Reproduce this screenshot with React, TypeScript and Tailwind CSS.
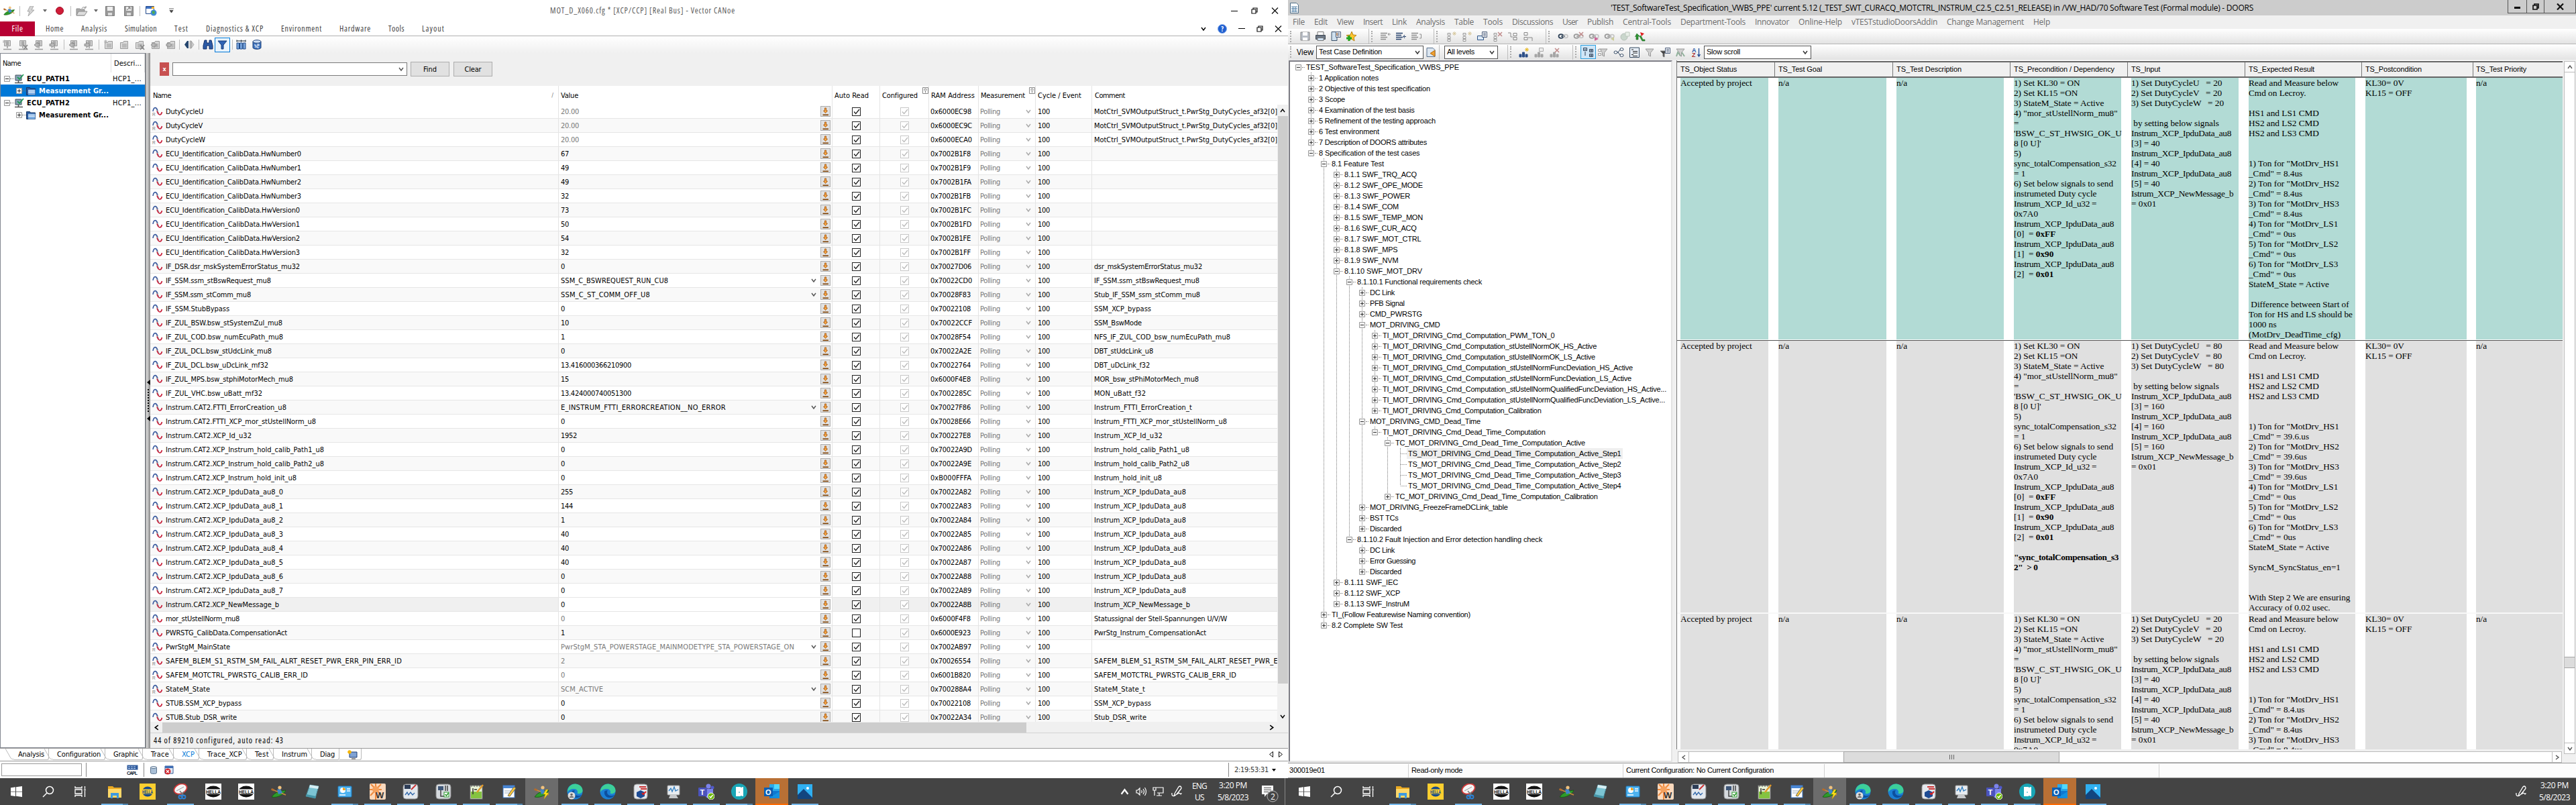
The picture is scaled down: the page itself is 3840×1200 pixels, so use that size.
import { useLayoutEffect, useRef } from "react";
import type { ReactNode } from "react";

/* ---------- text that is tracked to a given width ---------- */

function Fit({ w, className = "", children }: { w: number; className?: string; children: string }) {
  const ref = useRef<HTMLSpanElement>(null);
  useLayoutEffect(() => {
    const el = ref.current;
    if (!el) return;
    el.style.letterSpacing = "0px";
    const natural = el.getBoundingClientRect().width;
    el.style.letterSpacing = `${(w - natural) / Math.max(1, children.length)}px`;
  }, [w, children]);
  return (
    <span className={"inline-block shrink-0 whitespace-pre " + className} style={{ width: w }}>
      <span ref={ref} className="inline-block whitespace-pre">{children}</span>
    </span>
  );
}

/* advance widths of the 11px grid face */
const ADV: Record<number, string> = {
  2: "il", 3: "j. :", 4: "fItr/[]-,", 5: "ckszJL", 6: "abdeghnopquvxyBEFKPSTVXYZ_0123456789",
  7: "ACDGHNRU", 8: "mwMOQ", 10: "W",
};
const adv: Record<string, number> = {};
Object.entries(ADV).forEach(([n, s]) => s.split("").forEach((c) => (adv[c] = Number(n))));
const gridWidth = (s: string) => s.split("").reduce((a, c) => a + (adv[c] ?? 6), 0);

const G = ({ children, className = "" }: { children: string; className?: string }) => (
  <Fit w={gridWidth(children)} className={className}>{children}</Fit>
);

const TAHOMA = "font-['DejaVu_Sans_Condensed','DejaVu_Sans',sans-serif] [font-stretch:condensed] text-[11px]";
const SEGOE = "font-['Open_Sans','Noto_Sans',sans-serif] text-[12px]";
const MSSANS = "font-['Liberation_Sans',sans-serif] text-[11px]";

/* ---------- small glyphs ---------- */

const Chevron = ({ className = "text-[#555]", d = "down", s = 8 }: { className?: string; d?: "down" | "up" | "left" | "right"; s?: number }) => {
  const p = { down: "M1 2l3 4 3-4", up: "M1 6l3-4 3 4", left: "M6 1L2 4l4 3", right: "M2 1l4 3-4 3" }[d];
  return (
    <svg width={s} height={s} viewBox="0 0 8 8" className={"shrink-0 " + className}>
      <path d={p} fill="none" stroke="currentColor" strokeWidth="1.4" />
    </svg>
  );
};

const Sep = ({ className = "mx-[5px]" }: { className?: string }) => <div className={"h-[15px] w-px shrink-0 bg-[#bdbdbd] " + className} />;

const Kayak = ({ size = 24, bolt = false }: { size?: number; bolt?: boolean }) => (
  <svg width={size} height={size} viewBox="0 0 24 24">
    <path d="M1 20C6 12 15 11 22 10C20 16 10 22 1 20z" fill="#2e9a2a" stroke="#12570f" strokeWidth=".8" />
    <path d="M2 9l20 8" stroke="#c98a3c" strokeWidth="1.6" />
    <path d="M1 7l4 1.5-1 3-4-2z" fill="#b56c2a" />
    <path d="M9 9l5-1 3 6-6 2z" fill="#3f86c8" />
    <circle cx="13" cy="6" r="2.6" fill="#f1c27d" />
    {bolt && <path d="M18 9l-4 7h3l-2 7 7-9h-4l3-5z" fill="#ffe11a" stroke="#c79a00" strokeWidth=".5" />}
  </svg>
);

const Restore = ({ w = 1.2 }: { w?: number }) => (
  <svg width="10" height="10" viewBox="0 0 10 10" fill="none" stroke="#111" strokeWidth={w}>
    <path d="M3 3V1h6v6H7M1 3h6v6H1z" />
  </svg>
);
const Close = ({ w = 1.3 }: { w?: number }) => (
  <svg width="11" height="10" viewBox="0 0 11 10" stroke="#111" strokeWidth={w}><path d="M1 .5l9 9M10 .5l-9 9" /></svg>
);
const Min = () => <div className="h-[1px] w-[10px] bg-black" />;

const Slot = ({ children, w = 23 }: { children?: ReactNode; w?: number }) => (
  <div className="flex shrink-0 items-center justify-center" style={{ width: w }}>{children}</div>
);

/* greyed measurement-setup glyphs */
const Dev = ({ v = 0, folder = false }: { v?: number; folder?: boolean }) => (
  <svg width="16" height="16" viewBox="0 0 16 16" fill="none" stroke="#9c9c9c">
    {folder ? (
      <path d="M2.5 4.5h4l1-2h6v11h-11zM5 7h7M5 9h7M5 11h7" fill="#d8d8d8" />
    ) : (
      <>
        <path d="M3.5 1.5h9v8h-9z" fill="#cfcfcf" />
        <path d="M8 10v3M2 14.5h12M6 3.5h4M6 5.5h4M6 7.5h4" strokeWidth="1.5" />
      </>
    )}
    {v === 1 && <path d="M1 3h5M3.5 .5v5M1.5 1l4 4M5.500 1l-4 4" stroke="#b0b0b0" />}
    {v === 2 && <path d="M9 8l6 7M15 8l-6 7" stroke="#8a8a8a" strokeWidth="1.8" />}
    {v === 3 && <path d="M6 4L1 8l5 4V9.500h3v-3H6z" fill="#bbb" stroke="#8f8f8f" />}
    {v === 4 && <path d="M4 4l5 4-5 4V9.500H1v-3h3z" fill="#bbb" stroke="#8f8f8f" />}
  </svg>
);

/* ---------- measurement window ---------- */

type Row = [name: string, value: string, addr: string, comment: string, flags?: string];
/* flags: r = read only, d = value drop-down, u = unchecked, s = selected */
const rows: Row[] = [
  ["DutyCycleU", "20.00", "0x6000EC98", "MotCtrl_SVMOutputStruct_t.PwrStg_DutyCycles_af32[0]", "r"],
  ["DutyCycleV", "20.00", "0x6000EC9C", "MotCtrl_SVMOutputStruct_t.PwrStg_DutyCycles_af32[0]", "r"],
  ["DutyCycleW", "20.00", "0x6000ECA0", "MotCtrl_SVMOutputStruct_t.PwrStg_DutyCycles_af32[0]", "r"],
  ["ECU_Identification_CalibData.HwNumber0", "67", "0x7002B1F8", ""],
  ["ECU_Identification_CalibData.HwNumber1", "49", "0x7002B1F9", ""],
  ["ECU_Identification_CalibData.HwNumber2", "49", "0x7002B1FA", ""],
  ["ECU_Identification_CalibData.HwNumber3", "32", "0x7002B1FB", ""],
  ["ECU_Identification_CalibData.HwVersion0", "73", "0x7002B1FC", ""],
  ["ECU_Identification_CalibData.HwVersion1", "50", "0x7002B1FD", ""],
  ["ECU_Identification_CalibData.HwVersion2", "54", "0x7002B1FE", ""],
  ["ECU_Identification_CalibData.HwVersion3", "32", "0x7002B1FF", ""],
  ["IF_DSR.dsr_mskSystemErrorStatus_mu32", "0", "0x70027D06", "dsr_mskSystemErrorStatus_mu32"],
  ["IF_SSM.ssm_stBswRequest_mu8", "SSM_C_BSWREQUEST_RUN_CU8", "0x70022CD0", "IF_SSM.ssm_stBswRequest_mu8", "d"],
  ["IF_SSM.ssm_stComm_mu8", "SSM_C_ST_COMM_OFF_U8", "0x70028F83", "Stub_IF_SSM_ssm_stComm_mu8", "d"],
  ["IF_SSM.StubBypass", "0", "0x70022108", "SSM_XCP_bypass"],
  ["IF_ZUL_BSW.bsw_stSystemZul_mu8", "10", "0x70022CCF", "SSM_BswMode"],
  ["IF_ZUL_COD.bsw_numEcuPath_mu8", "1", "0x70028F54", "NFS_IF_ZUL_COD_bsw_numEcuPath_mu8"],
  ["IF_ZUL_DCL.bsw_stUdcLink_mu8", "0", "0x70022A2E", "DBT_stUdcLink_u8"],
  ["IF_ZUL_DCL.bsw_uDcLink_mf32", "13.416000366210900", "0x70022764", "DBT_uDcLink_f32"],
  ["IF_ZUL_MPS.bsw_stphiMotorMech_mu8", "15", "0x6000F4E8", "MOR_bsw_stPhiMotorMech_mu8"],
  ["IF_ZUL_VHC.bsw_uBatt_mf32", "13.424000740051300", "0x7002285C", "MON_uBatt_f32"],
  ["Instrum.CAT2.FTTI_ErrorCreation_u8", "E_INSTRUM_FTTI_ERRORCREATION__NO_ERROR", "0x70027F86", "Instrum_FTTI_ErrorCreation_t", "d"],
  ["Instrum.CAT2.FTTI_XCP_mor_stUstellNorm_u8", "0", "0x70028E66", "Instrum_FTTI_XCP_mor_stUstellNorm_u8"],
  ["Instrum.CAT2.XCP_Id_u32", "1952", "0x700227E8", "Instrum_XCP_Id_u32"],
  ["Instrum.CAT2.XCP_Instrum_hold_calib_Path1_u8", "0", "0x70022A9D", "Instrum_hold_calib_Path1_u8"],
  ["Instrum.CAT2.XCP_Instrum_hold_calib_Path2_u8", "0", "0x70022A9E", "Instrum_hold_calib_Path2_u8"],
  ["Instrum.CAT2.XCP_Instrum_hold_init_u8", "0", "0xB000FFFA", "Instrum_hold_init_u8"],
  ["Instrum.CAT2.XCP_IpduData_au8_0", "255", "0x70022A82", "Instrum_XCP_IpduData_au8"],
  ["Instrum.CAT2.XCP_IpduData_au8_1", "144", "0x70022A83", "Instrum_XCP_IpduData_au8"],
  ["Instrum.CAT2.XCP_IpduData_au8_2", "1", "0x70022A84", "Instrum_XCP_IpduData_au8"],
  ["Instrum.CAT2.XCP_IpduData_au8_3", "40", "0x70022A85", "Instrum_XCP_IpduData_au8"],
  ["Instrum.CAT2.XCP_IpduData_au8_4", "40", "0x70022A86", "Instrum_XCP_IpduData_au8"],
  ["Instrum.CAT2.XCP_IpduData_au8_5", "40", "0x70022A87", "Instrum_XCP_IpduData_au8"],
  ["Instrum.CAT2.XCP_IpduData_au8_6", "0", "0x70022A88", "Instrum_XCP_IpduData_au8"],
  ["Instrum.CAT2.XCP_IpduData_au8_7", "0", "0x70022A89", "Instrum_XCP_IpduData_au8"],
  ["Instrum.CAT2.XCP_NewMessage_b", "0", "0x70022A8B", "Instrum_XCP_NewMessage_b", "s"],
  ["mor_stUstellNorm_mu8", "0", "0x6000F4F8", "Statussignal der Stell-Spannungen U/V/W", "r"],
  ["PWRSTG_CalibData.CompensationAct", "1", "0x6000E923", "PwrStg_Instrum_CompensationAct", "u"],
  ["PwrStgM_MainState", "PwrStgM_STA_POWERSTAGE_MAINMODETYPE_STA_POWERSTAGE_ON", "0x7002AB97", "", "rd"],
  ["SAFEM_BLEM_S1_RSTM_SM_FAIL_ALRT_RESET_PWR_ERR_PIN_ERR_ID", "2", "0x70026554", "SAFEM_BLEM_S1_RSTM_SM_FAIL_ALRT_RESET_PWR_ERR_PIN_ERR_ID", "r"],
  ["SAFEM_MOTCTRL_PWRSTG_CALIB_ERR_ID", "0", "0x6001B820", "SAFEM_MOTCTRL_PWRSTG_CALIB_ERR_ID", "r"],
  ["StateM_State", "SCM_ACTIVE", "0x700288A4", "StateM_State_t", "rd"],
  ["STUB.SSM_XCP_bypass", "0", "0x70022108", "SSM_XCP_bypass"],
  ["STUB.Stub_DSR_write", "0", "0x70022A34", "Stub_DSR_write"],
];

const Wave = ({ r }: { r: boolean }) => (
  <svg width="16" height="14" viewBox="0 0 16 14" className="shrink-0">
    <path d="M1 7C2 0 6 0 8 6" fill="none" stroke="#3a5ba0" strokeWidth="1.6" />
    <path d="M6 4l4 6" stroke="#8c8c9a" strokeWidth="1.2" />
    <path d="M7 6.500C9 13 13 14 14.500 8" fill="none" stroke="#c8203a" strokeWidth="1.6" />
    {r && <text x="0" y="14" fontSize="6.500" fill="#777" fontFamily="Liberation Sans">R</text>}
  </svg>
);

const ReadButton = () => (
  <div className="flex h-[16px] w-[15px] shrink-0 items-center justify-center border border-[#adadad] bg-[#e1e1e1]">
    <svg width="11" height="13" viewBox="0 0 11 13">
      <path d="M4.500 1h2v4h2L5.500 8.500 2.500 5h2z" fill="#ffb04a" stroke="#a8550a" strokeWidth=".9" />
      <path d="M1.500 10.500h8.500v1.600H1.500z" fill="#7c3e00" />
    </svg>
  </div>
);

const Check = ({ on = true, dim = false }: { on?: boolean; dim?: boolean }) => (
  <div className={"flex h-[13px] w-[13px] items-center justify-center border bg-white " + (dim ? "border-[#c8c8c8] text-[#bbb]" : "border-[#222] text-[#222]")}>
    {on && <svg width="10" height="9" viewBox="0 0 10 9"><path d="M1 4.500L3.700 7.500 9 1" fill="none" stroke="currentColor" strokeWidth="1.3" /></svg>}
  </div>
);

const COLS = "grid grid-cols-[609px_408px_71px_73px_74px_85px_84px_276px]";
const CELL = "flex items-center overflow-hidden border-r border-[#e4e4e4]";

const Pin = () => (
  <svg width="9" height="10" viewBox="0 0 9 10" className="mb-[14px] ml-auto shrink-0" fill="none" stroke="#888"><path d="M.5.5h8v9h-8z" /><path d="M3 2.500h3v2L4.500 6 3 4.500zM4.500 5.500v3" /></svg>
);

const GridRow = ({ row, i }: { row: Row; i: number }) => {
  const f = row[4] ?? "";
  const bg = f.includes("s") ? "bg-[#f0f0f0]" : i % 2 ? "bg-[#f9f9f9]" : "bg-white";
  const ro = f.includes("r");
  return (
    <div className={`${COLS} h-[21px] border-b border-[#e6e6e6] ${bg}`}>
      <div className={CELL + " gap-[4px] pl-[3px]"}><Wave r={ro} /><G>{row[0]}</G></div>
      <div className={CELL + " pl-[3px] pr-[2px]" + (f.includes("s") ? " bg-white" : "") + (ro ? " text-[#787878]" : "")}>
        <G>{row[1]}</G>
        <div className="ml-auto flex items-center gap-[6px]">{f.includes("d") && <Chevron />}<ReadButton /></div>
      </div>
      <div className={CELL + " pl-[29px]"}><Check on={!f.includes("u")} /></div>
      <div className={CELL + " pl-[30px]"}><Check dim /></div>
      <div className={CELL + " pl-[2px]"}><G>{row[2]}</G></div>
      <div className={CELL + " justify-between pl-[2px] pr-[6px] text-[#787878]"}><G>Polling</G><Chevron className="text-[#aaa]" /></div>
      <div className={CELL + " pl-[3px]"}><G>100</G></div>
      <div className="flex items-center overflow-hidden pl-[3px]"><G>{row[3]}</G></div>
    </div>
  );
};

const EcuIcon = () => (
  <svg width="15" height="15" viewBox="0 0 15 15" className="shrink-0">
    <path d="M2 2h9v8H2z" fill="#8aa3b8" stroke="#44525f" /><path d="M6.500 10v3M1 13.500h12" stroke="#555" strokeWidth="1.600" />
    <path d="M5 5l3 3 6-7" fill="none" stroke="#1f9a55" strokeWidth="1.800" />
  </svg>
);
const FolderIcon = () => (
  <svg width="14" height="13" viewBox="0 0 14 13" className="shrink-0">
    <path d="M.5 1.500h5l1 1.500h7v9.500H.5z" fill="#2c5a9e" stroke="#173968" /><path d="M3 4.500h10.500v8H3z" fill="#7fb0e4" /><path d="M3 6.500h10M3 8.500h10" stroke="#fff" strokeWidth=".8" />
  </svg>
);
const Box = ({ open }: { open: boolean }) => (
  <svg width="9" height="9" viewBox="0 0 9 9" className="relative shrink-0">
    <path d="M.5.5h8v8h-8z" fill="#f2f2f2" stroke="#999" /><path d={open ? "M2 4.500h5" : "M2 4.500h5M4.500 2v5"} stroke="#333" />
  </svg>
);

const EcuTree = () => {
  const ecu = (n: string) => (
    <div className="flex h-[18px] items-center pl-[5px]">
      <Box open /><div className="w-[6px] border-t border-dotted border-[#777]" /><EcuIcon />
      <Fit w={64} className="ml-[4px] font-bold">{n}</Fit><Fit w={43} className="ml-[64px]">HCP1_...</Fit>
    </div>
  );
  const grp = (sel: boolean) => (
    <div className={"flex h-[18px] items-center pl-[23px] font-bold " + (sel ? "bg-[#0078d7] text-white" : "")}>
      <Box open={false} /><div className="w-[6px] border-t border-dotted border-[#777]" /><FolderIcon />
      <Fit w={104} className="ml-[5px]">Measurement Gr...</Fit>
    </div>
  );
  return (
    <div className="h-[1036px] w-[217px] shrink-0 border border-[#828790] bg-white">
      <div className="flex h-[28px] items-center">
        <Fit w={27} className="ml-[3px]">Name</Fit>
        <div className="ml-[134px] h-full w-px bg-[#e0e0e0]" />
        <Fit w={41} className="ml-[4px]">Descri...</Fit>
        <div className="ml-auto h-full w-px bg-[#e0e0e0]" />
      </div>
      <div>
        {ecu("ECU_PATH1")}{grp(true)}{ecu("ECU_PATH2")}{grp(false)}
      </div>
    </div>
  );
};

const winTabs: [string, number][] = [["Home", 27], ["Analysis", 39], ["Simulation", 48], ["Test", 21], ["Diagnostics & XCP", 86], ["Environment", 61], ["Hardware", 47], ["Tools", 24], ["Layout", 34]];
const bottomTabs: [string, number][] = [["Analysis", 39], ["Configuration", 65], ["Graphic", 37], ["Trace", 27], ["XCP", 19], ["Trace_XCP", 52], ["Test", 21], ["Instrum", 38], ["Diag", 22]];

const Floppy = ({ arrow = false }: { arrow?: boolean }) => (
  <svg width="14" height="15" viewBox="0 0 14 15"><path d="M.5.5h13v14H.5z" fill="#9a9a9a" stroke="#7d7d7d" /><path d="M3 1h8v6H3z" fill="#eee" /><path d="M4 10h6v4H4z" fill="#dcdcdc" />{arrow && <path d="M4 6l5-4M6 2h3v3" stroke="#666" fill="none" />}</svg>
);

const CanoeWindow = () => (
  <div className={"flex h-[1160px] w-[1920px] shrink-0 flex-col bg-white text-black " + TAHOMA}>
    {/* title bar */}
    <div className="flex h-[32px] shrink-0 items-center">
      <div className="flex w-[820px] items-center pl-[5px]">
        <Kayak size={18} />
        <Sep className="ml-[6px]" />
        <svg width="12" height="15" viewBox="0 0 12 15" className="ml-[10px]"><path d="M5 0L1 8h3l-2 7 9-9H7l3-6z" fill="#d4d4d4" stroke="#a9a9a9" /></svg>
        <svg width="6" height="4" className="ml-[12px]"><path d="M0 0h6L3 4z" fill="#666" /></svg>
        <div className="ml-[13px] h-[12px] w-[12px] rounded-full border border-[#a00c25] bg-[#d01c38]" />
        <Sep className="ml-[10px]" />
        <svg width="18" height="15" viewBox="0 0 18 15" className="ml-[7px]"><path d="M1 4h5l1 1h6v9H1z" fill="#aaa" stroke="#8a8a8a" /><path d="M4 8h13l-4 6H1z" fill="#ddd" stroke="#8f8f8f" /><path d="M9 4c1-3 4-3 6-1M15 0v3h-3" fill="none" stroke="#8a8a8a" /></svg>
        <svg width="6" height="4" className="ml-[9px]"><path d="M0 0h6L3 4z" fill="#666" /></svg>
        <div className="ml-[11px]"><Floppy /></div>
        <div className="ml-[14px]"><Floppy arrow /></div>
        <Sep className="ml-[9px]" />
        <svg width="17" height="15" viewBox="0 0 17 15" className="ml-[8px]"><path d="M.5.5h12v11H.5z" fill="#fff" stroke="#234a8c" /><path d="M1 1h12v3H1z" fill="#3f72c4" /><path d="M9 1h4v3H9z" fill="#f0b030" /><circle cx="12" cy="10" r="4.500" fill="#3f8ad6" /><path d="M10 7l4 1-1 4-3-1z" fill="#4cae4c" /></svg>
        <svg width="7" height="8" className="ml-[18px]"><path d="M0 1h7M1 3.500h5L3.500 7z" fill="#444" stroke="#444" strokeWidth=".8" /></svg>
      </div>
      <Fit w={276} className={SEGOE + " text-[#5a5a5a]"}>MOT_D_X060.cfg * [XCP/CCP] [Real Bus] - Vector CANoe</Fit>
      <div className="ml-auto flex items-center gap-[20px] pr-[14px]"><Min /><Restore /><Close /></div>
    </div>
    {/* ribbon tabs */}
    <div className={"flex h-[22px] shrink-0 items-center border-b border-[#b0b0b0] text-[#444] " + SEGOE}>
      <div className="flex h-[22px] w-[52px] items-center justify-center bg-[#b70032] text-white"><Fit w={17}>File</Fit></div>
      <div className="ml-[16px] flex gap-[26px]">{winTabs.map(([t, w]) => <Fit key={t} w={w}>{t}</Fit>)}</div>
      <div className="ml-auto flex items-center gap-[17px] pr-[9px]">
        <Chevron className="text-black" />
        <div className="flex h-[14px] w-[14px] items-center justify-center rounded-full border border-[#7fa6e8] bg-[#1f5fd0] text-[10px] font-bold text-white">?</div>
        <Min /><Restore /><Close />
      </div>
    </div>
    {/* tool bar */}
    <div className="flex h-[25px] shrink-0 items-center bg-gradient-to-b from-white to-[#f0f0f0]">
      <Slot w={22}><Dev v={1} /></Slot><Slot w={24}><Dev v={2} /></Slot><Slot><Dev v={3} /></Slot><Slot><Dev v={4} /></Slot>
      <Sep className="ml-[3px] mr-[2px]" />
      <Slot><Dev v={3} /></Slot><Slot><Dev v={4} /></Slot><Sep className="ml-[3px] mr-[2px]" />
      <Slot><Dev folder v={1} /></Slot><Slot><Dev folder /></Slot><Slot w={24}><Dev folder v={2} /></Slot><Slot><Dev folder v={3} /></Slot><Slot><Dev folder v={4} /></Slot>
      <Sep className="ml-[1px] mr-[3px]" />
      <Slot w={22}><svg width="16" height="13" viewBox="0 0 16 13"><path d="M5 1v11L1 6.500zM7 1v11H5V1z" fill="#26466f" /><path d="M9 1v11h2V1zM11 1v11l4-5.500z" fill="#ccc" stroke="#999" strokeWidth=".7" /></svg></Slot>
      <Sep className="ml-[3px] mr-[2px]" />
      <Slot w={21}><svg width="16" height="15" viewBox="0 0 16 15"><path d="M3 1h3v4h4V1h3l2 8v5h-5V9H6v5H1V9z" fill="#2d5ba6" stroke="#15316a" /></svg></Slot>
      <div className="flex h-[22px] w-[23px] items-center justify-center border border-[#0078d7] bg-[#e8f3fc]"><svg width="15" height="14" viewBox="0 0 15 14"><path d="M1 1h13L9 7v6H6V7z" fill="#2f63b5" stroke="#163b78" /></svg></div>
      <Sep className="mx-[3px]" />
      <Slot w={18}><svg width="15" height="15" viewBox="0 0 15 15"><path d="M1 2h13M1 .5v3M7.500.5v3M14 .5v3" stroke="#123" /><path d="M1 5h3.500v9H1zM5.500 5h3.800v9H5.500zM10.300 5H14v9h-3.700z" fill="#7ba7de" stroke="#204b8a" /></svg></Slot>
      <Slot w={30}><svg width="14" height="15" viewBox="0 0 14 15"><path d="M1 3v9c0 3 12 3 12 0V3z" fill="#3e74be" stroke="#1b3f78" /><ellipse cx="7" cy="3" rx="6" ry="2.300" fill="#cfe0f5" stroke="#1b3f78" /><path d="M3 8h2v4M7 7h3v2H7v3h3" stroke="#fff" fill="none" /></svg></Slot>
    </div>
    {/* body */}
    <div className="flex h-[1036px] shrink-0">
      <EcuTree />
      <div className="flex w-[7px] shrink-0 flex-col items-center justify-center gap-[6px] border-l border-[#888] bg-gradient-to-r from-[#e4e4e4] to-[#8a8a8a] text-black">
        <svg width="5" height="8"><path d="M5 0v8L0 4z" /></svg>
        <div className="h-[34px] border-l-2 border-dotted border-black" />
        <svg width="5" height="8"><path d="M5 0v8L0 4z" /></svg>
      </div>
      <div className="flex w-[1696px] flex-col bg-[#f0f0f0]">
        <div className="flex h-[49px] shrink-0 items-center pb-[1px] pl-[14px]">
          <div className="flex h-[20px] w-[14px] items-center justify-center bg-[#c75050] text-[9px] font-bold text-white">x</div>
          <div className="ml-[5px] flex h-[20px] w-[350px] items-center justify-end border border-[#7a7a7a] bg-white pr-[4px]"><Chevron /></div>
          <div className="ml-[5px] flex h-[22px] w-[58px] items-center justify-center border border-[#adadad] bg-[#e1e1e1]"><G>Find</G></div>
          <div className="ml-[6px] flex h-[22px] w-[58px] items-center justify-center border border-[#adadad] bg-[#e1e1e1]"><G>Clear</G></div>
        </div>
        <div className="flex h-[948px] shrink-0 flex-col">
          <div className="h-[28px] w-full shrink-0 bg-white">
            <div className={COLS + " h-full"}>
              <div className={CELL + " justify-between pl-[4px] pr-[7px]"}><Fit w={27}>Name</Fit><span className="text-[9px] text-[#777]">/</span></div>
              <div className={CELL + " pl-[3px]"}><G>Value</G></div>
              <div className={CELL + " pl-[3px]"}><Fit w={51}>Auto Read</Fit></div>
              <div className={CELL + " pl-[3px]"}><Fit w={53}>Configured</Fit><Pin /></div>
              <div className={CELL + " pl-[3px]"}><Fit w={65}>RAM Address</Fit></div>
              <div className={CELL + " pl-[3px]"}><Fit w={66}>Measurement</Fit><Pin /></div>
              <div className={CELL + " pl-[3px]"}><Fit w={65}>Cycle / Event</Fit></div>
              <div className="flex items-center pl-[4px]"><Fit w={45}>Comment</Fit></div>
            </div>
          </div>
          <div className="flex h-[920px] overflow-hidden bg-white">
            <div className="w-[1680px] shrink-0">{rows.map((r, i) => <GridRow key={i} row={r} i={i} />)}</div>
            <div className="flex w-[16px] flex-col items-center bg-[#f0f0f0]">
              <div className="flex h-[17px] items-center"><Chevron d="up" className="text-black" /></div>
              <div className="h-[846px] w-[15px] bg-[#cdcdcd]" />
              <div className="mt-auto flex h-[17px] items-center"><Chevron className="text-black" /></div>
            </div>
          </div>
        </div>
        <div className="mt-[1px] flex h-[15px] shrink-0 items-center">
          <div className="flex w-[18px] justify-center"><Chevron d="left" className="text-black" s={9} /></div>
          <div className="h-[15px] w-[1288px] bg-[#cdcdcd]" />
          <div className="ml-auto mr-[20px]"><Chevron d="right" className="text-black" s={9} /></div>
        </div>
        <div className="flex flex-1 items-center border-t border-[#d4d4d4] pl-[5px] font-['Open_Sans','Noto_Sans',sans-serif] text-[12px]"><Fit w={194}>44 of 89210 configured, auto read: 43</Fit></div>
      </div>
    </div>
    {/* desktop tabs */}
    <div className="flex h-[20px] shrink-0 items-start border-y border-[#999] pl-[8px]">
      {bottomTabs.map(([t, w]) => (
        <div key={t} className="-mr-[7px] flex h-[17px]">
          <svg width="13" height="17" viewBox="0 0 13 17" fill="none" stroke="#bbb"><path d="M0 0l8 14q1 2 5 2" /></svg>
          <div className={"flex items-center rounded-br-[3px] border-b border-r border-[#bbb] pl-[6px] pr-[6px] " + (t === "XCP" ? "text-[#0078d7]" : "")}><Fit w={w}>{t}</Fit></div>
        </div>
      ))}
      <div className="ml-[7px] flex h-[17px] items-center rounded-br-[3px] border-b border-r border-[#bbb] pl-[11px] pr-[4px]">
        <svg width="17" height="15" viewBox="0 0 17 15"><path d="M4 4h11v8H4z" fill="#7fa2d4" stroke="#1f3f77" /><path d="M7 14h6" stroke="#333" /><path d="M1 4h6M4 1v6M2 2l4 4M6 2L2 6" stroke="#f5b400" strokeWidth="1.300" /></svg>
      </div>
      <div className="ml-auto flex h-full items-center gap-[8px] pr-[8px]">
        <svg width="6" height="10" fill="none" stroke="#111"><path d="M5.500.5v8l-5-4z" /></svg>
        <svg width="6" height="10" fill="none" stroke="#111"><path d="M.5.5v8l5-4z" /></svg>
      </div>
    </div>
    {/* status bar */}
    <div className="flex h-[25px] shrink-0 items-center pl-[2px]">
      <div className="h-[19px] w-[120px] border border-[#999]" />
      <div className="ml-[6px] h-[21px] w-px bg-[#888]" />
      <svg width="17" height="15" viewBox="0 0 17 15" className="ml-[60px]"><path d="M.5.500h16v7H.500z" fill="#2f5a9c" /><path d="M2 3h3M6 3h3M10 3h3M2 5.500h3M6 5.500h3M10 5.500h3" stroke="#bcd3f2" /><text x="0" y="14.500" fontSize="7" fontWeight="bold" fill="#123" textLength="16" fontFamily="Liberation Sans">CAPL</text></svg>
      <div className="ml-[8px] h-[21px] w-px bg-[#888]" />
      <svg width="10" height="12" viewBox="0 0 10 12" className="ml-[9px]"><path d="M.5 2v8c0 2 9 2 9 0V2z" fill="#a9bfd6" stroke="#5e7690" /><ellipse cx="5" cy="2" rx="4.500" ry="1.500" fill="#e0eaf4" stroke="#5e7690" /></svg>
      <svg width="16" height="14" viewBox="0 0 16 14" className="ml-[10px]"><path d="M2 1h12v11H2z" fill="#dfe8f3" stroke="#345b96" /><path d="M2 1h12v3H2z" fill="#3c6cb4" /><circle cx="6" cy="9" r="4.500" fill="#d0262c" /><path d="M4 7l4 4M8 7l-4 4" stroke="#fff" strokeWidth="1.300" /></svg>
      <div className="ml-auto h-[21px] w-px bg-[#888]" />
      <Fit w={51} className="ml-[8px] text-[#333]">2:19:53:31</Fit>
      <svg width="6" height="4" className="ml-[5px] mr-[18px]"><path d="M0 0h6L3 4z" /></svg>
    </div>
  </div>
);

/* ---------- specification window ---------- */

const menu: [string, number][] = [["File", 18], ["Edit", 20], ["View", 25], ["Insert", 29], ["Link", 22], ["Analysis", 43], ["Table", 29], ["Tools", 29], ["Discussions", 61], ["User", 23], ["Publish", 39], ["Central-Tools", 72], ["Department-Tools", 97], ["Innovator", 51], ["Online-Help", 65], ["vTESTstudioDoorsAddin", 128], ["Change Management", 115], ["Help", 25]];

/* level, box (+ closed, - open, blank leaf, s selected leaf), label, width */
const tree: [number, string, string, number][] = [
  [0, "-", "TEST_SoftwareTest_Specification_VWBS_PPE", 228],
  [1, "+", "1 Application notes", 89],
  [1, "+", "2 Objective of this test specification", 166],
  [1, "+", "3 Scope", 39],
  [1, "+", "4 Examination of the test basis", 142.5],
  [1, "+", "5 Refinement of the testing approach", 174],
  [1, "+", "6 Test environment", 90],
  [1, "+", "7 Description of DOORS attributes", 161],
  [1, "-", "8 Specification of the test cases", 150.5],
  [2, "-", "8.1 Feature Test", 78],
  [3, "+", "8.1.1 SWF_TRQ_ACQ", 108],
  [3, "+", "8.1.2 SWF_OPE_MODE", 117],
  [3, "+", "8.1.3 SWF_POWER", 98],
  [3, "+", "8.1.4 SWF_COM", 81],
  [3, "+", "8.1.5 SWF_TEMP_MON", 117],
  [3, "+", "8.1.6 SWF_CUR_ACQ", 107.5],
  [3, "+", "8.1.7 SWF_MOT_CTRL", 114.5],
  [3, "+", "8.1.8 SWF_MPS", 79.5],
  [3, "+", "8.1.9 SWF_NVM", 80.5],
  [3, "-", "8.1.10 SWF_MOT_DRV", 116],
  [4, "-", "8.1.10.1 Functional requirements check", 186],
  [5, "+", "DC Link", 37],
  [5, "+", "PFB Signal", 51.5],
  [5, "+", "CMD_PWRSTG", 78],
  [5, "-", "MOT_DRIVING_CMD", 104.5],
  [6, "+", "TI_MOT_DRIVING_Cmd_Computation_PWM_TON_0", 256.5],
  [6, "+", "TI_MOT_DRIVING_Cmd_Computation_stUstellNormOK_HS_Active", 319],
  [6, "+", "TI_MOT_DRIVING_Cmd_Computation_stUstellNormOK_LS_Active", 317],
  [6, "+", "TI_MOT_DRIVING_Cmd_Computation_stUstellNormFuncDeviation_HS_Active", 373],
  [6, "+", "TI_MOT_DRIVING_Cmd_Computation_stUstellNormFuncDeviation_LS_Active", 371],
  [6, "+", "TI_MOT_DRIVING_Cmd_Computation_stUstellNormQualifiedFuncDeviation_HS_Active...", 423],
  [6, "+", "TI_MOT_DRIVING_Cmd_Computation_stUstellNormQualifiedFuncDeviation_LS_Active...", 421],
  [6, "+", "TI_MOT_DRIVING_Cmd_Computation_Calibration", 236.5],
  [5, "-", "MOT_DRIVING_CMD_Dead_Time", 165],
  [6, "-", "TI_MOT_DRIVING_Cmd_Dead_Time_Computation", 242.5],
  [7, "-", "TC_MOT_DRIVING_Cmd_Dead_Time_Computation_Active", 283],
  [8, "s", "TS_MOT_DRIVING_Cmd_Dead_Time_Computation_Active_Step1", 317.5],
  [8, "", "TS_MOT_DRIVING_Cmd_Dead_Time_Computation_Active_Step2", 317.5],
  [8, "", "TS_MOT_DRIVING_Cmd_Dead_Time_Computation_Active_Step3", 317.5],
  [8, "", "TS_MOT_DRIVING_Cmd_Dead_Time_Computation_Active_Step4", 317.5],
  [7, "+", "TC_MOT_DRIVING_Cmd_Dead_Time_Computation_Calibration", 301.5],
  [5, "+", "MOT_DRIVING_FreezeFrameDCLink_table", 205.5],
  [5, "+", "BST TCs", 42.5],
  [5, "+", "Discarded", 47],
  [4, "-", "8.1.10.2 Fault Injection and Error detection handling check", 276],
  [5, "+", "DC Link", 37],
  [5, "+", "Error Guessing", 68],
  [5, "+", "Discarded", 47],
  [3, "+", "8.1.11 SWF_IEC", 80],
  [3, "+", "8.1.12 SWF_XCP", 83],
  [3, "+", "8.1.13 SWF_InstruM", 97],
  [2, "+", "TI_(Follow Featurewise Naming convention)", 207],
  [2, "+", "8.2 Complete SW Test", 106],
];

const continues = (r: number, level: number) => {
  for (let s = r + 1; s < tree.length; s++) {
    if (tree[s][0] === level) return true;
    if (tree[s][0] < level) return false;
  }
  return false;
};

const VLine = ({ part }: { part: "full" | "half" | "none" }) => (
  <svg width="1" height="16" className="shrink-0">
    {part !== "none" && <path d={part === "full" ? "M.5 0v16" : "M.5 0v8"} stroke="#777" strokeDasharray="1 1" />}
  </svg>
);

const SpecTree = () => (
  <div className={"h-[1046px] w-[572px] shrink-0 overflow-hidden border-2 border-[#7d7d85] border-b-[#e3e3e3] border-r-[#e3e3e3] bg-white pl-[3px] " + MSSANS}>
    {tree.map(([lv, box, label, w], r) => {
      const leaf = box === "" || box === "s";
      return (
        <div key={r} className="flex h-[16px] items-center">
          {Array.from({ length: lv }, (_, k) => (
            <div key={k} className="flex w-[19px] shrink-0 justify-center"><VLine part={continues(r, k) ? "full" : "none"} /></div>
          ))}
          <div className="relative flex w-[19px] shrink-0 items-center justify-center">
            <VLine part={lv === 0 ? "none" : continues(r, lv) ? "full" : "half"} />
            {!leaf && <div className="absolute left-[5px] top-[4px]"><Box open={box === "-"} /></div>}
            <div className={"absolute top-[8px] border-t border-dotted border-[#888] " + (leaf ? "left-[10px] w-[9px]" : "left-[15px] w-[4px]")} />
          </div>
          <div className={"flex h-[16px] items-center pl-[2px] pr-[2px] " + (box === "s" ? "bg-[#efefef]" : "")}><Fit w={w}>{label}</Fit></div>
        </div>
      );
    })}
  </div>
);

const SPEC_COLS = "grid grid-cols-[146px_176px_175px_175px_175px_174px_166px_133px]";

const heads: [string, number][] = [["TS_Object Status", 84], ["TS_Test Goal", 65], ["TS_Test Description", 97], ["TS_Precondition / Dependency", 150], ["TS_Input", 43], ["TS_Expected Result", 98], ["TS_Postcondition", 84], ["TS_Test Priority", 75]];

const pre = `1) Set KL30 = ON
2) Set KL15 =ON
3) StateM_State = Active
4) "mor_stUstellNorm_mu8"
=
'BSW_C_ST_HWSIG_OK_U
8 [0 U]'
5)
sync_totalCompensation_s32
= 1
6) Set below signals to send
instrumeted Duty cycle
Instrum_XCP_Id_u32 =
0x7A0
Instrum_XCP_IpduData_au8
[0]  = *0xFF
Instrum_XCP_IpduData_au8
[1]  = *0x90
Instrum_XCP_IpduData_au8
[2]  = *0x01`;

const input = (duty: number, v: number) => `1) Set DutyCycleU   = ${duty}
2) Set DutyCycleV   = ${duty}
3) Set DutyCycleW   = ${duty}

 by setting below signals
Instrum_XCP_IpduData_au8
[3] = ${v}
Instrum_XCP_IpduData_au8
[4] = ${v}
Instrum_XCP_IpduData_au8
[5] = ${v}
Istrum_XCP_NewMessage_b
= 0x01`;

const expected = (a: string, b: string, tail: string) => `Read and Measure below
Cmd on Lecroy.

HS1 and LS1 CMD
HS2 and LS2 CMD
HS2 and LS3 CMD


1) Ton for "MotDrv_HS1
_Cmd" = ${a}
2) Ton for "MotDrv_HS2
_Cmd" = ${b}
3) Ton for "MotDrv_HS3
_Cmd" = ${b}
4) Ton for "MotDrv_LS1
_Cmd" = 0us
5) Ton for "MotDrv_LS2
_Cmd" = 0us
6) Ton for "MotDrv_LS3
_Cmd" = 0us
StateM_State = Active
${tail}`;

/* identifiers set tighter than running text */
const tracking = (l: string) =>
  l.startsWith("*") ? "tracking-[-0.38px]" : /^I\w+_/.test(l) ? "tracking-[-0.3px]" : /^sync_/.test(l) ? "tracking-[-0.16px]" : "tracking-[-0.04px]";

/* an asterisk switches the rest of the line to bold */
const Lines = ({ text }: { text: string }) => (
  <>
    {text.split("\n").map((l, i) => {
      const [a, b] = l.split("*");
      return <div key={i} className={"h-[15px] whitespace-pre " + tracking(l)}>{a}{b && <b>{b}</b>}</div>;
    })}
  </>
);

const SpecRow = ({ h, tint, cells }: { h: string; tint: string; cells: string[] }) => (
  <div className={`${SPEC_COLS} ${h} shrink-0 overflow-hidden bg-white`}>
    {cells.map((c, i) => (
      <div key={i} className={i === 7 ? "pl-[4px]" : "border-r border-white pl-[5px] pr-[9px]"}>
        <div className={"h-full font-['Liberation_Serif',serif] text-[13.333px] leading-[15px] " + tint}><Lines text={c} /></div>
      </div>
    ))}
  </div>
);

const Grip = () => <div className="ml-[3px] h-[17px] w-[2px] shrink-0 border-l-2 border-dotted border-[#aaa]" />;

const Select = ({ w, tw, children }: { w: number; tw: number; children: string }) => (
  <div className={"flex h-[20px] shrink-0 items-center justify-between border border-[#555] bg-white pl-[3px] pr-[4px] text-black " + MSSANS} style={{ width: w }}>
    <Fit w={tw}>{children}</Fit><Chevron className="text-[#333]" />
  </div>
);

const Svg = ({ children, w = 17 }: { children: ReactNode; w?: number }) => (
  <svg width={w} height="16" viewBox="0 0 17 16" fill="none" stroke="#777">{children}</svg>
);
const ListGlyph = ({ c, tip }: { c: string; tip: string }) => <Svg><path d="M1 3.500h10M1 6.500h8M1 9.500h10M1 12.500h8" stroke={c} strokeWidth="1.500" /><path d={tip} stroke={c} /></Svg>;
const Nodes = ({ extra }: { extra?: ReactNode }) => <Svg><path d="M3 3.500h4v3H3zM3 8.500h4v3H3zM3 12.500h4v3H3z" fill="#f3f3f3" stroke="#999" />{extra}</Svg>;
const burst = (c: string) => <path d="M10 4h6M13 1v6M11 2l4 4M15 2l-4 4" stroke={c} />;
const Link2 = ({ extra, dim = true }: { extra?: ReactNode; dim?: boolean }) => <Svg><ellipse cx="5" cy="8" rx="3.500" ry="2.800" stroke={dim ? "#9a9a9a" : "#2b3f55"} strokeWidth="1.700" /><path d="M5 8h6" stroke={dim ? "#9a9a9a" : "#2b3f55"} strokeWidth="1.500" /><ellipse cx="12" cy="8" rx="3" ry="2.500" stroke="#c4c4c4" strokeWidth="1.500" />{extra}</Svg>;
const Chart = ({ c, extra }: { c: string; extra?: ReactNode }) => <Svg><path d="M2 11h3v4H2zM6.500 8h3v7h-3zM11 11h3v4h-3z" fill={c} stroke={c} />{extra}</Svg>;
const Funnel = ({ extra }: { extra?: ReactNode }) => <Svg><path d="M2 3h12L9.500 8.500V14l-3-1.500v-4z" fill="#d0d0d0" stroke="#999" />{extra}</Svg>;
const Page = <path d="M8.500 1.500h7v8h-7zM10 3.500h4M10 5.500h4M10 7.500h4" fill="#fff" stroke="#4a5c7a" />;
const Cross = <path d="M9 2l6 6M15 2L9 8" stroke="#c08a8a" strokeWidth="1.500" />;

const SpecWindow = () => {
  const bar = "flex shrink-0 items-center bg-gradient-to-b from-white to-[#e3e3e3] ";
  return (
    <div className={"flex h-[1160px] w-[1920px] shrink-0 flex-col bg-[#f0f0f0] text-black " + MSSANS}>
      <div className={"flex h-[23px] shrink-0 items-center bg-[#cccccc] pl-[3px] " + SEGOE}>
        <svg width="13" height="16" viewBox="0 0 13 16"><path d="M.5.5h9l3 3v12H.5z" fill="#fff" stroke="#4d6c86" /><path d="M2 6h9M2 8.500h9M2 11h9M2 13.500h9M4.500 6v8M8 6v8" stroke="#5b87ac" /></svg>
        <Fit w={958} className="ml-[465px]">{"'TEST_SoftwareTest_Specification_VWBS_PPE' current 5.12 (_TEST_SWT_CURACQ_MOTCTRL_INSTRUM_C2.5_C2.51_RELEASE) in /VW_HAD/70 Software Test (Formal module) - DOORS"}</Fit>
        <div className="mb-auto ml-auto flex h-[20px] border border-t-0 border-[#555]">
          <div className="flex w-[28px] items-center justify-center border-r border-[#555]"><div className="mt-[4px] h-[3px] w-[9px] bg-black" /></div>
          <div className="flex w-[26px] items-center justify-center border-r border-[#555]"><Restore w={1.7} /></div>
          <div className="flex w-[46px] items-center justify-center"><Close w={2.2} /></div>
        </div>
      </div>
      <div className={"flex h-[20px] shrink-0 items-center gap-[14px] pl-[7px] text-[#6d6d6d] " + SEGOE}>
        {menu.map(([t, w]) => <Fit key={t} w={w}>{t}</Fit>)}
      </div>
      <div className={bar + "h-[23px] border-b border-[#b5b5b5]"}>
        <Grip />
        <div className="ml-[9px] flex">
          <Slot><Svg><path d="M2 2h13v12H2z" fill="#b9bec6" stroke="#888" /><path d="M5 2h7v5H5zM5 10h7v4H5z" fill="#fff" stroke="none" /></Svg></Slot>
          <Slot><Svg><path d="M4 1.500h9v5H4z" fill="#fff" /><path d="M1.500 6.500h14v6h-14z" fill="#6d7886" stroke="#3d4650" /><path d="M4 10.500h9v4H4z" fill="#cfe2f5" /></Svg></Slot>
          <Slot><Svg><path d="M2 1.500h8v13H2z" fill="#cfe0ee" stroke="#3b5068" />{Page}<path d="M9 4h2M9 6h2" stroke="#e08020" /></Svg></Slot>
          <Slot><Svg><path d="M9 1l2 5 5 .5-4 3.500 1 5-4.500-3L4 15l1-5-4-3.500L7 6z" fill="#ffc62e" stroke="#b88210" /><path d="M5 7v8M1 11h8" stroke="#1ea51e" strokeWidth="3" /></Svg></Slot>
        </div>
        <Sep className="ml-[14px] h-[22px]" /><Grip />
        <div className="ml-[8px] flex">
          <Slot><ListGlyph c="#8e8e8e" tip="M16 5h-3M14 3l-2 2 2 2" /></Slot><Slot><ListGlyph c="#25406b" tip="M16 8.500h-4M14 6l-2 2.500 2 2.500" /></Slot><Slot><ListGlyph c="#8e8e8e" tip="M13 5h2.500v6H13" /></Slot>
        </div>
        <Sep className="ml-[14px] h-[22px]" /><Grip />
        <div className="ml-[9px] flex">
          <Slot><Nodes extra={burst("#d8c9a0")} /></Slot><Slot><Nodes extra={burst("#d8c9a0")} /></Slot>
          <Slot><Svg><path d="M1.500 7.500h9v6h-9z" fill="#dce9f6" stroke="#2f5487" />{Page}</Svg></Slot>
          <Slot><Nodes extra={Cross} /></Slot><Slot><Svg><path d="M1 3h4v6h3M9 3.500h5v4H9zM9 9.500h5v4H9z" stroke="#888" /></Svg></Slot><Slot><Svg><path d="M2 2.500h5v4H2zM2 9.500h5v4H2zM8 10h6v5" stroke="#888" /></Svg></Slot>
        </div>
        <Sep className="ml-[14px] h-[22px]" /><Grip />
        <div className="ml-[9px] flex">
          <Slot><Link2 dim={false} /></Slot><Slot><Link2 extra={Cross} /></Slot>
          <Slot><Link2 extra={<path d="M9 9l6 3-6 3z" fill="#c69" stroke="none" />} /></Slot>
          <Slot><Link2 extra={<path d="M15 9l-5 3 5 3z" fill="#cc9" stroke="none" />} /></Slot>
          <Slot><Svg><circle cx="7" cy="9" r="5" fill="#c9d6cc" stroke="#b5c0b8" /><path d="M9 2h6v6H9z" fill="#e8efe8" stroke="#bcc7bc" /></Svg></Slot>
          <Slot><Svg><path d="M2 13V7l-1.500 2L3 4l4 4-2 0v5zM9 7l3 6h3v2h-4L7 8z" fill="#2f9a35" stroke="#15601a" strokeWidth=".6" /><path d="M8 2l6 2-4 4z" fill="#e02020" stroke="none" /></Svg></Slot>
        </div>
      </div>
      <div className={bar + "h-[23px]"}>
        <Grip />
        <Fit w={25} className={SEGOE + " ml-[8px]"}>View</Fit>
        <div className="ml-[4px] flex"><Select w={160} tw={94}>Test Case Definition</Select></div>
        <Slot w={22}><Svg><path d="M2 1.500h9l3 3v10H2z" fill="#dce6f0" stroke="#5b7390" /><path d="M14 5v9L7 9.500z" fill="#f0a030" stroke="#b06a10" /></Svg></Slot>
        <Sep className="ml-[1px] h-[22px]" />
        <div className="ml-[7px] flex"><Select w={80} tw={41}>All levels</Select></div>
        <Sep className="ml-[14px] h-[22px]" /><Grip />
        <div className="ml-[7px] flex"><Slot><Chart c="#2d4f86" extra={burst("#e8b820")} /></Slot><Slot><Chart c="#a5a5a5" extra={<path d="M8.500 1.500h6v5h-6z" fill="#eee" stroke="#aaa" />} /></Slot><Slot><Chart c="#a5a5a5" extra={Cross} /></Slot></div>
        <Sep className="ml-[15px] h-[22px]" /><Grip />
        <div className="ml-[6px] flex items-center">
          <div className="flex h-[21px] w-[23px] items-center justify-center border border-[#2a9fe0] bg-[#cfe6f7]"><Svg><path d="M1.500 1.500h5v4h-5zM10.500 3.500h5v4h-5zM10.500 10.500h5v4h-5zM2.500 3.500h3M11.500 5.500h3M13 4v3M11.500 12.500h3M13 11v3M4 7v6" stroke="#2c3e55" /></Svg></div>
          <Slot><Funnel extra={<path d="M.5 3.500h4v3h-4zM.5 9.500h4v3h-4z" fill="#fff" stroke="#999" />} /></Slot>
          <Slot><Svg><path d="M2 8h5l3-4M7 8l3 4" stroke="#2f4560" /><ellipse cx="3.500" cy="8" rx="2.500" ry="2" fill="#fff" stroke="#2f4560" /><ellipse cx="12.500" cy="3.500" rx="2.500" ry="2" fill="#fff" stroke="#2f4560" /><ellipse cx="12.500" cy="12.500" rx="2.500" ry="2" fill="#fff" stroke="#2f4560" /></Svg></Slot>
          <Slot><Svg><path d="M1.500 1h14v14.500h-14z" fill="#e7eef6" stroke="#33485f" /><path d="M4 4h3M6 6.500h7M6 9h7M4 11.500h3M6 13.500h7" stroke="#222" strokeWidth="1.200" /></Svg></Slot>
          <Slot><Funnel /></Slot><Slot><Svg><path d="M1 6h9L7 10v5l-2-1v-4z" fill="#444" />{Page}</Svg></Slot>
          <Slot><Funnel extra={<path d="M2 14l2-6 4 5M10 8l4 6" stroke="#8fb09a" strokeWidth="2" />} /></Slot>
          <Slot><Svg><text x="2" y="7.500" fontSize="9" fontWeight="bold" fill="#2b5ba8" stroke="none">A</text><text x="2" y="15" fontSize="9" fontWeight="bold" fill="#a83232" stroke="none">Z</text><path d="M12.500 2v11M10.500 11l2 3 2-3" stroke="#1f4a94" strokeWidth="1.300" /></Svg></Slot>
        </div>
        <div className="flex"><Select w={160} tw={50}>Slow scroll</Select></div>
      </div>
      <div className="flex h-[1048px] shrink-0 pl-[1px] pt-px">
        <SpecTree />
        <div className="ml-[6px] flex w-[1321px] shrink-0 flex-col">
          <div className="flex h-[1027px] flex-col overflow-hidden border-l border-[#777] bg-white">
            <div className={SPEC_COLS + " mt-px h-[25px] shrink-0 border-b-2 border-t-2 border-[#666] bg-[#f0f0f0]"}>
              {heads.map(([t, w], i) => <div key={t} className={"flex items-center " + (i === 7 ? "pl-[4px]" : "border-r border-[#777] pl-[5px]")}><Fit w={w}>{t}</Fit></div>)}
            </div>
            <SpecRow h="h-[390px]" tint="bg-[#b2dbd5]" cells={["Accepted by project", "n/a", "n/a", pre, input(20, 40), expected("8.4us", "8.4us", "\n Difference between Start of\nTon for HS and LS should be\n1000 ns\n(MotDrv_DeadTime_cfg)"), "KL30= 0V\nKL15 = OFF", "n/a"]} />
            <div className="h-[2px] shrink-0 border-b border-[#555] bg-white" />
            <SpecRow h="h-[405px]" tint="bg-[#e0e0e0]" cells={["Accepted by project", "n/a", "n/a", pre + "\n\n*\"sync_totalCompensation_s3\n*2\"  > 0", input(80, 160), expected("39.6.us", "39.6us", "\nSyncM_SyncStatus_en=1\n\n\nWith Step 2 We are ensuring\nAccuracy of 0.02 usec."), "KL30= 0V\nKL15 = OFF", "n/a"]} />
            <div className="h-[2px] shrink-0 bg-[#f8f8f8]" />
            <SpecRow h="h-[202px]" tint="bg-[#e0e0e0]" cells={["Accepted by project", "n/a", "n/a", pre, input(20, 40), expected("8.4.us", "8.4us", ""), "KL30= 0V\nKL15 = OFF", "n/a"]} />
          </div>
          <div className="ml-[2px] mt-[3px] flex h-[17px] w-[1318px] items-center border border-[#bbb] bg-white">
            <div className="flex h-full w-[16px] items-center justify-center border-r border-[#bbb]"><Chevron d="left" /></div>
            <div className="ml-[230px] flex h-[17px] w-[322px] items-center justify-center gap-[2px] border border-[#a5a5a5] bg-[#dcdcdc]">
              <div className="h-[7px] w-px bg-[#666]" /><div className="h-[7px] w-px bg-[#666]" /><div className="h-[7px] w-px bg-[#666]" />
            </div>
            <div className="ml-auto flex h-full w-[14px] items-center justify-center border-l border-[#bbb]"><Chevron d="right" /></div>
          </div>
        </div>
        <div className="ml-[2px] mt-[1px] flex h-[1033px] w-[17px] flex-col border border-[#bbb] bg-white">
          <div className="flex h-[16px] items-center justify-center border-b border-[#bbb]"><Chevron d="up" /></div>
          <div className="mt-[871px] h-[17px] border-y border-[#a5a5a5] bg-[#dcdcdc]" />
          <div className="mt-auto flex h-[16px] items-center justify-center border-t border-[#bbb]"><Chevron /></div>
        </div>
      </div>
      <div className="flex h-[23px] items-center border-y border-[#999] bg-[#fcfcfc]">
        <Fit w={53} className="ml-[2px]">300019e01</Fit>
        <div className="ml-[124px] h-[20px] w-px bg-[#d0d0d0]" />
        <Fit w={76} className="ml-[4px]">Read-only mode</Fit>
        <div className="ml-[239px] h-[20px] w-px bg-[#d0d0d0]" />
        <Fit w={220} className="ml-[4px]">Current Configuration: No Current Configuration</Fit>
        <div className="ml-[75px] h-[20px] w-px bg-[#d0d0d0]" />
        <div className="ml-[498px] h-[20px] w-px bg-[#d0d0d0]" />
      </div>
    </div>
  );
};

/* ---------- task bar ---------- */

const I = ({ children }: { children: ReactNode }) => <svg width="24" height="24" viewBox="0 0 24 24" fill="none">{children}</svg>;

const Hella = ({ bg, fg, blue }: { bg: string; fg: string; blue?: boolean }) => (
  <I><rect width="24" height="24" fill={bg} /><ellipse cx="12" cy="12" rx={blue ? 8 : 11.5} ry={blue ? 7.5 : 8.5} fill={fg} /><rect x={blue ? 3 : 0} y="8.500" width={blue ? 18 : 24} height="7" fill={bg} /><text x={blue ? 4 : 1} y="14.500" fontSize="7" fontWeight="900" fill={fg} textLength={blue ? 16 : 22} lengthAdjust="spacingAndGlyphs" fontFamily="Liberation Sans">HELLA</text></I>
);
const Edge = ({ user = false }: { user?: boolean }) => (
  <I><circle cx="12" cy="12" r="11.500" fill="#1b7fd4" /><path d="M1 11C2 3 9 0 14 .7 20 1.500 24 6 23.500 11c-.5 4-6 5-8 3.500 2-3-1-6.500-4.500-6.500C6 8 2 10 1 13z" fill="#3ccf9a" /><path d="M7 12c-1 6 4 10 9 9 3-.5 5-2 6-4-6 3-11 0-11-4 0-2 1-3 1-3-3 0-5 1-5 2z" fill="#0d4f9e" />{user && <><circle cx="7" cy="18" r="5.500" fill="#ddd" /><circle cx="7" cy="16.500" r="1.800" fill="#666" /><path d="M3.500 21c1-3 6-3 7 0z" fill="#666" /></>}</I>
);

const apps: { icon: ReactNode; state?: "run" | "more" | "active" | "alert" }[] = [
  { icon: <I><path d="M2 4h7l2 2h11v15H2z" fill="#e9a921" /><path d="M2 8h20v13H2z" fill="#ffd869" /><path d="M6 14h12v8h-3v-4H9v4H6z" fill="#3d9ae0" /></I>, state: "more" },
  { icon: <Hella bg="#fccf2f" fg="#164a8c" blue /> },
  { icon: <I><ellipse cx="12" cy="8" rx="10" ry="7" fill="#f6f6f6" stroke="#d23a3a" strokeWidth="1.800" transform="rotate(-25 12 8)" /><path d="M6 11l11-6" stroke="#999" /><path d="M11 11l7 8M17 12l-5 8" stroke="#777" strokeWidth="1.500" /><circle cx="17" cy="20" r="2.500" stroke="#2c82d8" strokeWidth="1.800" /><circle cx="12" cy="20" r="2.500" stroke="#2c82d8" strokeWidth="1.800" /></I>, state: "run" },
  { icon: <Hella bg="#ffffff" fg="#111111" /> },
  { icon: <Hella bg="#ffffff" fg="#111111" /> },
  { icon: <Kayak /> },
  { icon: <I><path d="M9 2l13 2-5 18-14-3z" fill="#7cc4d3" stroke="#4a8391" /><path d="M9 2l13 2-1 4-13-2z" fill="#d7eff4" /><path d="M3 19l14 3 1-3-14-3z" fill="#4596a8" /></I> },
  { icon: <I><rect x="2" y="4" width="20" height="16" rx="1" fill="#4db2f0" stroke="#1f7cc0" /><circle cx="9" cy="10" r="4" fill="#fff" /><path d="M9 10V6a4 4 0 014 4z" fill="#f5a623" /><path d="M15 8h5M15 11h5M4 17h9" stroke="#fff" strokeWidth="1.600" /></I>, state: "more" },
  { icon: <I><rect width="24" height="24" rx="2" fill="#fbd9bd" /><path d="M9 0v24M0 9h18M2 1l15 16M17 1L1 18" stroke="#ee8a3c" strokeWidth="2" /><circle cx="9" cy="9" r="5" fill="#f4a15e" /><text x="9" y="22" fontSize="13" fontWeight="bold" fill="#333" fontFamily="Liberation Sans">W</text></I>, state: "run" },
  { icon: <I><rect x="1" y="1" width="22" height="22" rx="4" fill="#e2e8ee" stroke="#888" /><rect x="3" y="2" width="9" height="6" fill="#2e3d57" /><path d="M4 17l3-4 2 4 3-4 3 4 3-3" stroke="#2c64a8" strokeWidth="1.300" /><path d="M13 9l7-7" stroke="#c33" strokeWidth="2" /></I>, state: "run" },
  { icon: <I><rect x="1" y="1" width="22" height="22" rx="4" fill="#d6dade" stroke="#888" /><rect x="4" y="4" width="8" height="6" fill="#3f5778" /><path d="M8 10v9h5M15 3v8M18 3v8" stroke="#444" strokeWidth="1.500" /><rect x="13" y="13" width="7" height="7" fill="#fff" stroke="#2a9a2a" /><path d="M14.500 16l2 2 3-4" stroke="#2a9a2a" strokeWidth="1.500" /></I>, state: "run" },
  { icon: <I><rect x="3" y="3" width="18" height="20" fill="#e8f3d8" stroke="#777" /><rect x="4" y="12" width="16" height="10" fill="#84c341" /><path d="M5 2v3M9 2v3M13 2v3M17 2v3" stroke="#555" /><path d="M13 13l9-11" stroke="#e39a2a" strokeWidth="2.500" /><path d="M7 7v9M9 9h4" stroke="#333" strokeWidth="1.500" /></I>, state: "run" },
  { icon: <I><rect x="3" y="3" width="17" height="18" fill="#fff" stroke="#3d77c2" /><rect x="3" y="3" width="17" height="4" fill="#4a86d4" /><path d="M5 11h10M5 14h8" stroke="#9ab" /><path d="M10 18l9-13 3 2-9 12z" fill="#ffc83a" stroke="#665" /></I>, state: "more" },
  { icon: <Kayak bolt />, state: "active" },
  { icon: <Edge user />, state: "run" },
  { icon: <Edge />, state: "run" },
  { icon: <I><rect x="2" y="1" width="20" height="22" rx="4" fill="#e4e7ec" stroke="#999" /><path d="M10 5h10M12 8h9" stroke="#c33" strokeWidth="2" /><path d="M6 13l6-3 6 3v6l-6 3-6-3z" fill="#1d4b94" /><path d="M14 14l2 2 4-4" stroke="#d22" strokeWidth="2" /></I>, state: "run" },
  { icon: <I><rect x="3" y="3" width="18" height="14" rx="1" fill="#e8edf2" stroke="#999" /><path d="M5 11l3-4 2 5 3-7 2 6 4-2" stroke="#2e7cbf" strokeWidth="1.300" /><path d="M7 17h9l3 5H5z" fill="#c6c9cc" /></I>, state: "run" },
  { icon: <I><circle cx="15" cy="4" r="3.500" fill="#7b83eb" /><circle cx="21" cy="6" r="2.500" fill="#5059c9" /><path d="M10 8h12v8a6 6 0 01-12 0z" fill="#7b83eb" /><rect y="6" width="13" height="13" rx="1" fill="#4b53bc" /><text x="2.500" y="16.500" fontSize="11" fontWeight="bold" fill="#fff" fontFamily="Liberation Sans">T</text><circle cx="19" cy="19" r="5" fill="#6bb700" stroke="#fff" /><path d="M16.500 19l2 2 3-4" stroke="#fff" strokeWidth="1.500" /></I>, state: "run" },
  { icon: <I><circle cx="12" cy="12" r="12" fill="#19a5b5" /><path d="M7 5h7v14H7zM14 6l4-1v14l-4-1z" fill="#fff" /><path d="M12 12v2" stroke="#19a5b5" /></I>, state: "more" },
  { icon: <I><rect x="8" y="1" width="15" height="20" fill="#28a8ea" /><path d="M15 1h8v7h-8z" fill="#50d9ff" /><path d="M8 11l15 0v11H8z" fill="#0f78d0" /><path d="M8 21l15-9v10z" fill="#1490df" /><rect y="6" width="13" height="13" fill="#0a5fb4" /><text x="2" y="16.500" fontSize="11" fontWeight="bold" fill="#fff" fontFamily="Liberation Sans">O</text></I>, state: "alert" },
  { icon: <I><rect x="1" y="1" width="22" height="22" fill="#2fb0f2" /><path d="M1 17l9-9 13 13v2H1z" fill="#12457f" /><circle cx="16" cy="7" r="2" fill="#fff" /></I>, state: "run" },
];

const Pen = () => <svg width="17" height="18" viewBox="0 0 17 18" fill="none" stroke="#fff" strokeWidth="1.300"><path d="M5 12L11 2q2-2 3.500 0 1 1.500 0 3L8 13q-2 2-3.500 1.500zM1 11q-1 6 5 4M9 13q2-3 4-1t2-1" /></svg>;

const Clock = () => (
  <div className="flex flex-col items-center leading-[18px]"><Fit w={42}>3:20 PM</Fit><Fit w={46}>5/8/2023</Fit></div>
);

const Taskbar = ({ full }: { full: boolean }) => (
  <div className="flex h-[40px] w-[1920px] shrink-0 bg-[#444444] font-['Open_Sans','Noto_Sans',sans-serif] text-[12px] text-white">
    <div className="flex w-[146px] shrink-0">
      <Slot w={48}><svg width="17" height="16" viewBox="0 0 17 16" fill="#fff"><path d="M0 2.300l7-1v6.400H0zM8 1.200L17 0v7.700H8zM0 8.600h7V15l-7-1zM8 8.600h9V16l-9-1.200z" /></svg></Slot>
      <Slot w={48}><svg width="18" height="18" viewBox="0 0 18 18" fill="none" stroke="#fff" strokeWidth="1.500"><circle cx="11" cy="7" r="5.500" /><path d="M7 11l-6 6" /></svg></Slot>
      <Slot w={48}><svg width="18" height="16" viewBox="0 0 18 16" fill="none" stroke="#fff" strokeWidth="1.300"><path d="M1 0v2.500h10V0M1 16v-2.500h10V16M1 5h10v6H1zM15.500 0v4M15.500 7v9M14 5.500h3" /></svg></Slot>
    </div>
    {apps.map((a, i) => (
      <div key={i} className={"flex h-[40px] w-[49px] shrink-0 flex-col items-center " + (a.state === "active" ? "bg-[#6c6c6c]" : a.state === "alert" ? "bg-[#b87035]" : "")}>
        <div className="flex h-[38px] items-center pt-px">{a.icon}</div>
        {a.state && a.state !== "active" && <div className={"flex h-[2px] " + (a.state === "alert" ? "w-[49px] bg-[#ff6a00]" : "w-[40px] bg-[#76b9ed]")}>{a.state === "more" && <div className="ml-auto w-[8px] bg-[#5187b0]" />}</div>}
      </div>
    ))}
    {full ? (
      <div className="ml-auto flex items-center">
        <Chevron d="up" className="text-white" s={13} />
        <svg width="17" height="14" viewBox="0 0 17 14" className="ml-[10px]" fill="none" stroke="#fff" strokeWidth="1.200"><path d="M1 5v4h2l3 3V2L3 5zM8.500 5q1.500 2 0 4M11 3q3 4 0 8M13.500 1q4 6 0 12" /></svg>
        <svg width="17" height="14" viewBox="0 0 17 14" className="ml-[8px]" fill="none" stroke="#fff" strokeWidth="1.200"><path d="M4 1h12v8H7M10 9v4M6 13h8M1 1v4h4V1zM3 5v8" /></svg>
        <div className="ml-[11px]"><Pen /></div>
        <div className="ml-[14px] flex w-[22px] flex-col items-center leading-[17px]"><Fit w={22}>ENG</Fit><Fit w={14}>US</Fit></div>
        <div className="ml-[16px]"><Clock /></div>
        <svg width="26" height="26" viewBox="0 0 26 26" className="ml-[19px] mr-[9px] mt-[5px]" fill="none"><path d="M1 1h17v13H8l-3 4v-4H1z" fill="#fff" /><path d="M4 4.500h11M4 7.500h11M4 10.500h7" stroke="#444" /><circle cx="17" cy="17" r="8" fill="#444" stroke="#999" strokeWidth="1.300" /><text x="14" y="21.500" fontSize="12" fill="#fff" fontFamily="Open Sans">2</text></svg>
        <div className="mr-[4px] h-[40px] w-px bg-[#888]" />
      </div>
    ) : (
      <div className="ml-auto flex items-center gap-[18px] pr-[9px]"><Pen /><Clock /></div>
    )}
  </div>
);

export default function App() {
  return (
    <div className="h-[1200px] w-[3840px] overflow-hidden leading-none">
      <div className="flex"><CanoeWindow /><SpecWindow /></div>
      <div className="flex"><Taskbar full /><Taskbar full={false} /></div>
    </div>
  );
}
